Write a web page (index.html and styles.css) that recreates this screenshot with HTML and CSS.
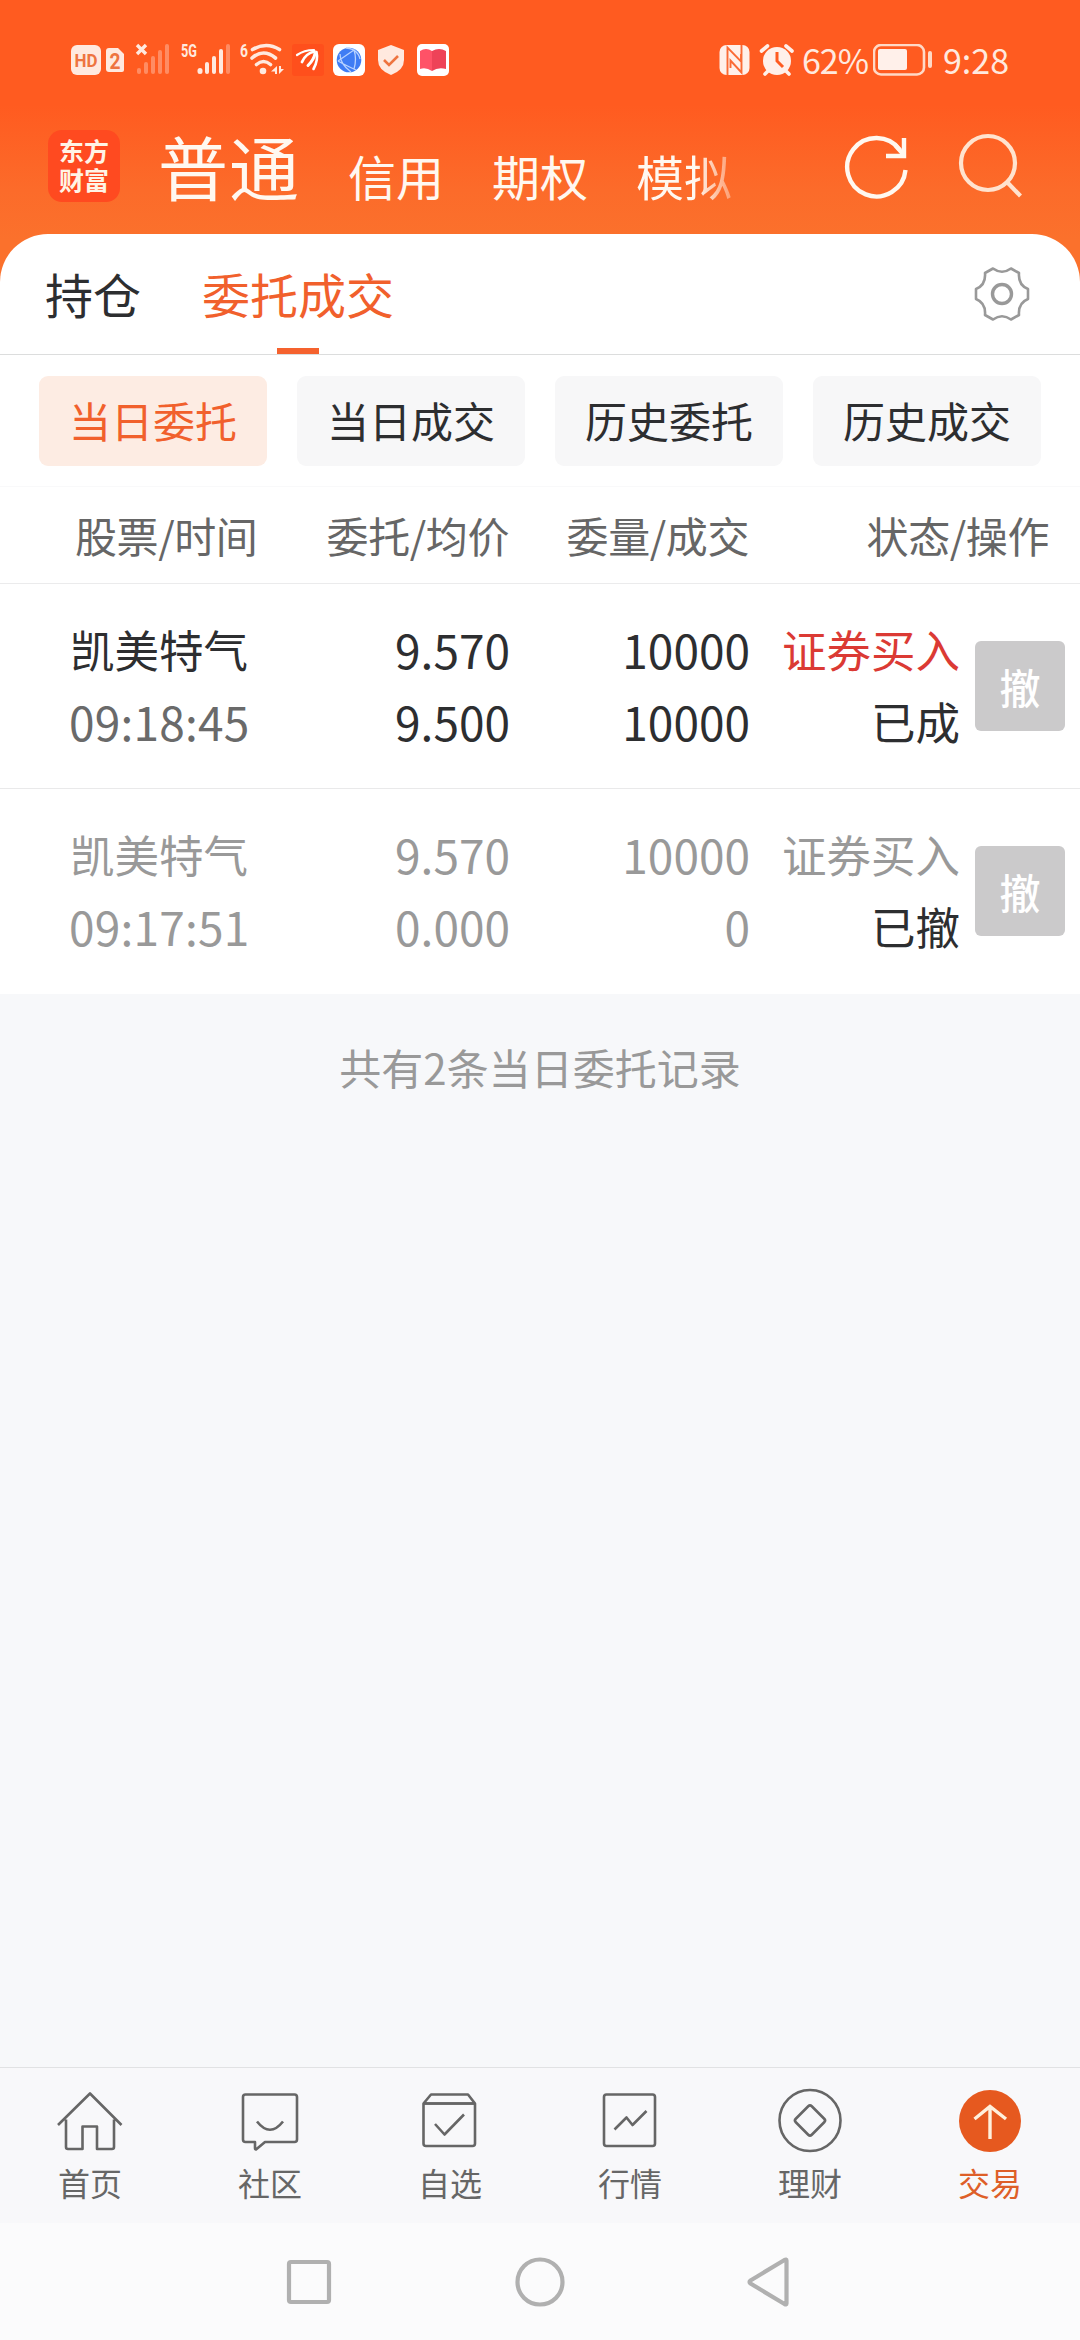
FILE: index.html
```html
<!DOCTYPE html>
<html lang="zh-CN">
<head>
<meta charset="utf-8">
<title>委托成交</title>
<link rel="stylesheet" href="styles.css">
</head>
<body>
<div class="app">
  <header class="top">
    <div class="status">
      <svg class="status-icons" width="384" height="40" viewBox="70 40 384 40">
        <g fill="#ffe9df">
          <rect x="71" y="45" width="30" height="30" rx="6"/>
          <path d="M109 48h9l6 6v16q0 2-2 2h-13q-3 0-3-3V51q0-3 3-3z"/>
          <path d="M137 45l9 9m0-9l-9 9" stroke="#ffe9df" stroke-width="3.4"/>
          <g opacity=".35"><rect x="137" y="68" width="4" height="6" rx="2"/><rect x="144" y="62" width="4" height="12" rx="2"/><rect x="151" y="56" width="4" height="18" rx="2"/><rect x="158" y="50" width="4" height="24" rx="2"/><rect x="165" y="44" width="4" height="30" rx="2"/></g>
          <rect x="197.500" y="68" width="5" height="6" rx="2.500"/><rect x="205" y="62" width="4" height="12" rx="2"/><rect x="212" y="56" width="4" height="18" rx="2"/><rect x="219" y="49" width="4" height="25" rx="2"/><rect x="226" y="44" width="4" height="30" rx="2" opacity=".35"/>
        </g>
        <text class="si hd" x="74.500" y="67" textLength="23" lengthAdjust="spacingAndGlyphs">HD</text>
        <text class="si two" x="109.500" y="69" textLength="11" lengthAdjust="spacingAndGlyphs">2</text>
        <text class="si net" x="181" y="57" textLength="16" lengthAdjust="spacingAndGlyphs">5G</text>
        <text class="si net" x="240" y="57" textLength="8" lengthAdjust="spacingAndGlyphs">6</text>
        <g fill="none" stroke="#ffe9df" stroke-width="3.600" stroke-linecap="round">
          <path d="M252.500 49.500q14-8 27 0M252 58q11.500-10 23.500 0M256.500 64.500q7-6 14 0"/>
        </g>
        <circle cx="263" cy="71" r="3.300" fill="#ffe9df"/>
        <path d="M277 66v8h-2v-2.500h-4zM279 66v8l5-5h-3v-3z" fill="#ffe9df"/>
        <rect x="292" y="44" width="32" height="32" rx="3" fill="#ff4f1c"/>
        <g fill="none" stroke="#fff" stroke-linecap="round">
          <path d="M314 50q-10 0-17 5" stroke-width="2.200"/>
          <path d="M314.500 51.500q-9 2-12.500 10.500" stroke-width="2.800"/>
          <path d="M315 53.500q-1 6-7 12" stroke-width="3"/>
          <path d="M316.500 52q2 8-3 17" stroke-width="2.600"/>
        </g>
        <rect x="333" y="44" width="32" height="32" rx="6" fill="#fff"/>
        <circle cx="349" cy="60" r="12.300" fill="#3f7cf4"/>
        <path d="M338 61l16-11q-5-2-8-2M338 61q7 4 18 9M354 50q3 9 0 19M340 54q0 10 11 18M354 50q5 4 6 9" fill="none" stroke="#b9d3ff" stroke-width="1.300"/>
        <path d="M391 45l13 5v10q0 10-13 15-13-5-13-15V50z" fill="#ffe9df"/>
        <path d="M384 60l5 5 9-9" fill="none" stroke="#ee7440" stroke-width="2.600"/>
        <rect x="417" y="44" width="32" height="32" rx="5" fill="#fff"/>
        <path d="M420 51q6-4 12 0v20q-6-4-12-2z" fill="#ff5267"/><path d="M432 51q7-4 14 0v18q-8-2-14 2z" fill="#ee4358"/>
      </svg>
      <div class="status-right">
        <svg width="76" height="32" viewBox="718 43 76 32">
          <rect x="718.500" y="44" width="30" height="30" rx="7" fill="#fff0ea"/>
          <path d="M726.500 74V46.500L740 60.500V53M740.500 44v27.500L729.500 59.500V67" fill="none" stroke="#fb6a35" stroke-width="1.900"/>
          <circle cx="776" cy="60" r="14" fill="#fff0ea"/>
          <path d="M760.500 50l6-5M791 50l-6-5M764 73l4-4M788 73l-4-4" stroke="#fff0ea" stroke-width="3.600" stroke-linecap="round"/>
          <path d="M776 51v9l6 6" fill="none" stroke="#ff5b20" stroke-width="3"/>
        </svg>
        <span class="pct">62%</span>
        <svg class="batt" width="60" height="32" viewBox="872 44 60 32">
          <rect x="873" y="45" width="50" height="29.500" rx="7" fill="none" stroke="#ffd9c6" stroke-width="2.600"/>
          <rect x="877" y="49" width="29" height="21" rx="2" fill="#fff0ea"/>
          <rect x="927" y="51" width="4" height="17" rx="2" fill="#ffd9c6"/>
        </svg>
        <span class="clock">9:28</span>
      </div>
    </div>
    <div class="mainbar">
      <div class="logo"><span>东方</span><span>财富</span></div>
      <nav class="modes">
        <span class="mode on">普通</span>
        <span class="mode">信用</span>
        <span class="mode">期权</span>
        <span class="mode fade">模拟</span>
      </nav>
      <div class="tools">
        <svg width="70" height="70" viewBox="841 132 70 70" fill="none" stroke="#fff8f0" stroke-width="4.400">
          <path d="M904.500 170a29.200 29.200 0 1 1-5.500-20"/><path d="M903 138v18H885"/><path d="M894 145l9 10"/>
        </svg>
        <svg width="70" height="70" viewBox="955 132 70 70" fill="none" stroke="#ffe3cf" stroke-width="4.200">
          <circle cx="987" cy="163" r="27"/><path d="M1006 182l13.500 14"/>
        </svg>
      </div>
    </div>
  </header>

  <main class="sheet">
    <div class="tabs">
      <span class="tab">持仓</span>
      <span class="tab on">委托成交</span>
      <svg class="gear" width="60" height="60" viewBox="-30 -30 60 60" fill="none" stroke="#999">
        <path stroke-width="2.600" stroke-linejoin="round" d="M-9-25.500Q0-19 9-25.500L17-21Q16-9 26-5V5Q16 9 17 21L9 25.500Q0 19-9 25.500L-17 21Q-16 9-26 5V-5Q-16-9-17-21Z"/>
        <circle r="9.500" stroke-width="3.400"/>
      </svg>
    </div>
    <div class="chips">
      <span class="chip on">当日委托</span>
      <span class="chip">当日成交</span>
      <span class="chip">历史委托</span>
      <span class="chip">历史成交</span>
    </div>
    <div class="thead">
      <span>股票/时间</span><span>委托/均价</span><span>委量/成交</span><span>状态/操作</span>
    </div>
    <div class="row">
      <div class="cell"><span>凯美特气</span><span class="time">09:18:45</span></div>
      <div class="cell"><span class="num">9.570</span><span class="num">9.500</span></div>
      <div class="cell"><span class="num">10000</span><span class="num">10000</span></div>
      <div class="cell"><span class="buy">证券买入</span><span>已成</span></div>
      <button class="cancel">撤</button>
    </div>
    <div class="row dim">
      <div class="cell"><span>凯美特气</span><span class="time">09:17:51</span></div>
      <div class="cell"><span class="num">9.570</span><span class="num">0.000</span></div>
      <div class="cell"><span class="num">10000</span><span class="num">0</span></div>
      <div class="cell"><span>证券买入</span><span class="state">已撤</span></div>
      <button class="cancel">撤</button>
    </div>
  </main>

  <p class="summary">共有2条当日委托记录</p>

  <nav class="tabbar">
    <div class="item">
      <svg viewBox="0 0 72 72"><path d="M4 41L36 9.500 67.500 41M12 35.500V63q0 2 2 2h14.500V42.500H43V65h15q2 0 2-2V35.500"/></svg>
      <span>首页</span>
    </div>
    <div class="item">
      <svg viewBox="0 0 72 72"><path d="M11.500 10.500h49q2.500 0 2.500 2.500v42.500q0 2.500-2.500 2.500H31l-9 7.500q-1 0-1-1.500v-6h-9.500Q9 58 9 55.500V13q0-2.500 2.500-2.500zM23 37.500q13 16.500 26 0"/></svg>
      <span>社区</span>
    </div>
    <div class="item">
      <svg viewBox="0 0 72 72"><path d="M9.500 19.500v40q0 2.500 2.500 2.500h46.500q2.500 0 2.500-2.500v-40L54 10.500H17zh51.500M21 40l9.500 10.500L50 30.500"/><path d="M9.500 19.500H61"/></svg>
      <span>自选</span>
    </div>
    <div class="item">
      <svg viewBox="0 0 72 72"><rect x="10" y="10.500" width="51" height="51.500" rx="2.500"/><path d="M20.500 45.500l12-12 6 7.500L52.500 27"/></svg>
      <span>行情</span>
    </div>
    <div class="item">
      <svg viewBox="0 0 72 72"><circle cx="36" cy="36.500" r="30.500"/><rect x="24.700" y="25.200" width="22.600" height="22.600" rx="2.500" transform="rotate(45 36 36.500)"/></svg>
      <span>理财</span>
    </div>
    <div class="item on">
      <svg viewBox="0 0 72 72"><circle class="disc" cx="36" cy="37" r="31"/><path class="arrow" d="M36 55V22M20.500 35L36 22.500 52 35"/></svg>
      <span>交易</span>
    </div>
  </nav>

  <div class="sysnav">
    <svg width="504" height="60" viewBox="286 2252 504 60" fill="none" stroke="#b0b0b0" stroke-width="4.200" stroke-linejoin="round">
      <rect x="289" y="2262" width="40" height="40" rx="2"/>
      <circle cx="540" cy="2282" r="22.500"/>
      <path d="M786.500 2260.500v43q0 1.500-2 .500l-34-20.500q-2-1.500 0-3l34-20.500q2-1 2 .500z"/>
    </svg>
  </div>
</div>
</body>
</html>
```
FILE: styles.css
```css
* { box-sizing: border-box; }
body {
  margin: 0;
  font-family: "Noto Sans CJK SC", sans-serif;
  color: #2d2e30;
}
.app {
  width: 1080px;
  height: 2340px;
  display: flex;
  flex-direction: column;
  background: #f7f8fa;
  overflow: hidden;
}

/* status bar and main header */
.top {
  height: 290px;
  margin-bottom: -56px;
  flex: none;
  background: linear-gradient(#ff5b20 0, #ff5b20 105px, #fc6b2a 190px, #fb712c 240px);
}
.status {
  height: 120px;
  padding: 0 70px 0 70px;
  display: flex;
  justify-content: space-between;
  align-items: center;
}
.si { font-family: "Roboto", sans-serif; font-weight: 700; }
.hd { font-size: 19px; fill: #ee7440; }
.two { font-size: 22px; fill: #ee7440; }
.net { font-size: 18.500px; fill: #ffe9df; }
.status-right {
  display: flex;
  align-items: center;
  height: 40px;
  color: #ffe9df;
  font-size: 34px;
  line-height: 40px;
}
.pct { width: 64px; margin-left: 7px; letter-spacing: -1px; }
.batt { margin-left: 7px; }
.clock { margin-left: 10px; width: 67px; white-space: nowrap; }
.mainbar {
  height: 114px;
  padding: 10px 54px 0 48px;
  display: flex;
  align-items: flex-start;
  color: #fff8f0;
}
.logo {
  width: 72px;
  height: 72px;
  border-radius: 14px;
  background: #ff4a20;
  display: flex;
  flex-direction: column;
  align-items: center;
  padding-top: 6px;
  font-size: 25px;
  line-height: 29px;
  font-weight: 700;
  color: #fff4e6;
}
.modes {
  display: flex;
  align-items: baseline;
  height: 72px;
  margin-left: 38px;
  gap: 48px;
  font-size: 48px;
  line-height: 72px;
}
.mode { white-space: nowrap; }
.mode.on { font-size: 70px; letter-spacing: 1px; }
.mode.fade {
  color: transparent;
  background: linear-gradient(90deg, #fff8f0 62%, rgba(255, 248, 240, 0.350));
  -webkit-background-clip: text;
  background-clip: text;
}
.tools { display: flex; gap: 44px; margin-left: auto; margin-top: 2px; }

/* order sheet */
.sheet {
  background: #fff;
  border-radius: 48px 48px 0 0;
  height: 760px;
  flex: none;
}
.tabs {
  height: 121px;
  border-bottom: 1px solid #dcdddd;
  padding: 0 48px 0 45px;
  display: flex;
  font-size: 48px;
  line-height: 118px;
}
.tab { white-space: nowrap; }
.tab.on {
  margin-left: 61px;
  color: #f1602c;
  background: linear-gradient(#f5622e, #f5622e) center 114px / 42px 6px no-repeat;
}
.gear { margin: 30px 0 0 auto; }
.chips {
  height: 132px;
  padding: 21px 39px 0;
  display: flex;
  gap: 30px;
  border-bottom: 1px solid #f9f9fa;
}
.chip {
  width: 228px;
  height: 90px;
  border-radius: 9px;
  background: #f7f7f8;
  text-align: center;
  font-size: 42px;
  line-height: 88px;
}
.chip.on { background: #fdece3; color: #f1602c; }
.thead {
  height: 97px;
  border-bottom: 1px solid #ebebec;
  padding: 0 31px 0 75px;
  display: grid;
  grid-template-columns: 184px 250px 240px 300px;
  font-size: 42px;
  letter-spacing: -0.400px;
  line-height: 95px;
  color: #666;
  white-space: nowrap;
}
.thead span { text-align: right; }
.thead span:first-child { text-align: left; }
.row {
  height: 205px;
  border-bottom: 1px solid #e9e9ea;
  padding: 29px 0 0 70px;
  display: grid;
  grid-template-columns: 190px 250px 240px 210px 90px;
  font-size: 44.500px;
  line-height: 72px;
  white-space: nowrap;
}
.row.dim { border-bottom: 0; color: #999; }
.cell { display: flex; flex-direction: column; align-items: flex-end; }
.cell:first-child { align-items: flex-start; }
.num { font-size: 46px; }
.time { font-size: 46px; color: #6a6a6a; letter-spacing: 0.200px; margin-left: -1px; }
.dim .time { color: #999; }
.buy { color: #db3a34; }
.state { color: #2d2e30; }
.cancel {
  width: 90px;
  height: 90px;
  margin: 28px 0 0 15px;
  padding: 0;
  border: 0;
  border-radius: 6px;
  background: #cbcacb;
  color: #fff;
  font: 500 41px/87px "Noto Sans CJK SC", sans-serif;
}
.summary {
  margin: 0;
  padding-top: 42px;
  text-align: center;
  font-size: 42px;
  line-height: 62px;
  color: #999;
  flex: 1;
}

/* bottom navigation */
.tabbar {
  height: 156px;
  flex: none;
  border-top: 1px solid #e1e2e4;
  background: #f8f8fa;
  display: grid;
  grid-template-columns: repeat(6, 180px);
}
.item {
  padding-top: 16px;
  display: flex;
  flex-direction: column;
  align-items: center;
  font-size: 32px;
  line-height: 52px;
  color: #666;
}
.item svg {
  width: 72px;
  height: 72px;
  fill: none;
  stroke: #666;
  stroke-width: 2.600;
  stroke-linejoin: round;
}
.item.on { color: #de5f28; }
.item .disc { fill: #e6591f; stroke: none; }
.item .arrow { stroke: #fff0dc; stroke-width: 3.400; stroke-linejoin: miter; }
.sysnav {
  height: 117px;
  flex: none;
  background: #fbfbfc;
  display: flex;
  justify-content: center;
  align-items: center;
  padding-right: 4px;
}
```
